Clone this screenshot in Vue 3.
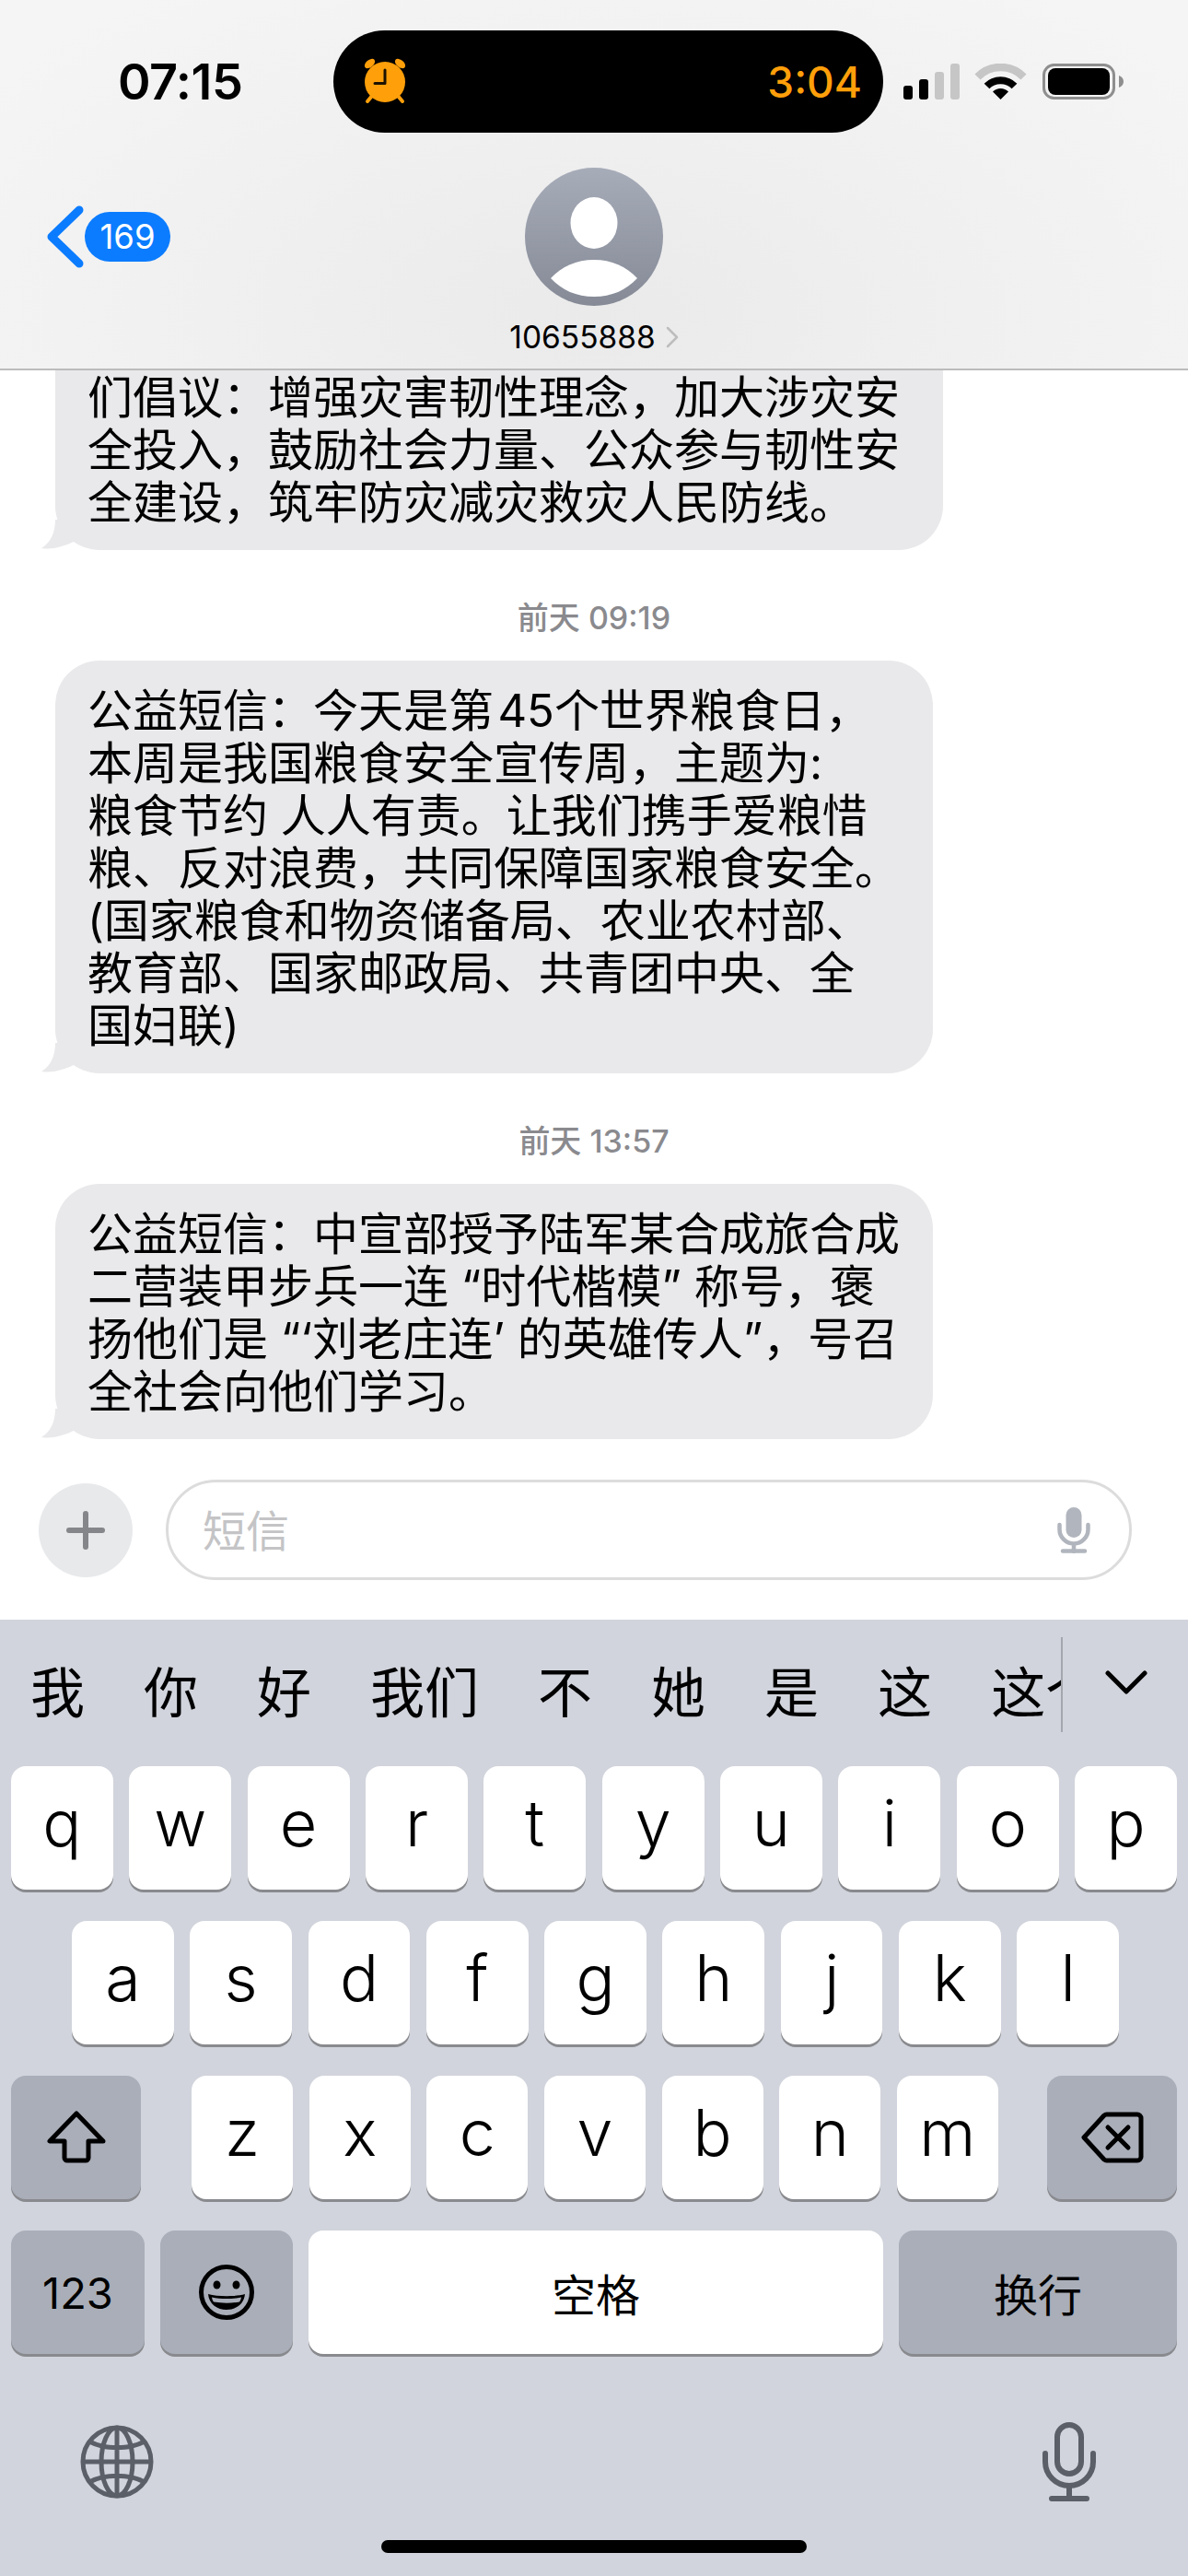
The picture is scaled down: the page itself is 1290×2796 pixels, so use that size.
<script setup>
const bubbles = [
  { time: null, cls: 'first', lines: ['们倡议：增强灾害韧性理念，加大涉灾安', '全投入，鼓励社会力量、公众参与韧性安', '全建设，筑牢防灾减灾救灾人民防线。'] },
  { time: '前天 09:19', cls: '', lines: ['公益短信：今天是第\u200A45个世界粮食日，', '本周是我国粮食安全宣传周，主题为:', '粮食节约 人人有责。让我们携手爱粮惜', '粮、反对浪费，共同保障国家粮食安全。', '(国家粮食和物资储备局、农业农村部、', '教育部、国家邮政局、共青团中央、全', '国妇联)'] },
  { time: '前天 13:57', cls: '', lines: ['公益短信：中宣部授予陆军某合成旅合成', '二营装甲步兵一连 “时代楷模” 称号，褒', '扬他们是 “‘刘老庄连’ 的英雄传人”，号召', '全社会向他们学习。'] },
]
const candidates = ['我', '你', '好', '我们', '不', '她', '是', '这', '这个']
const row1 = 'qwertyuiop'.split('')
const row2 = 'asdfghjkl'.split('')
const row3 = 'zxcvbnm'.split('')
</script>

<template>
  <div class="phone">
    <header class="header">
      <div class="status">
        <div class="time">07:15</div>
        <div class="island">
          <svg class="alarm" width="60" height="60" viewBox="0 0 60 60">
            <ellipse cx="13.5" cy="10" rx="6.5" ry="4" transform="rotate(-40 13.5 10)" fill="#ff9f0a" />
            <ellipse cx="46.5" cy="10" rx="6.5" ry="4" transform="rotate(40 46.5 10)" fill="#ff9f0a" />
            <path d="M16 45l-5 6M44 45l5 6" stroke="#ff9f0a" stroke-width="4" stroke-linecap="round" />
            <circle cx="30" cy="30" r="22" fill="#ff9f0a" />
            <path d="M30 17v14.500h-11" fill="none" stroke="#1c1200" stroke-width="3" stroke-linecap="round" stroke-linejoin="round" />
          </svg>
          <span class="timer">3:04</span>
        </div>
        <svg class="sysicons" width="240" height="40" viewBox="0 0 240 40">
          <rect x="0" y="24" width="10" height="15" rx="3" fill="#000" />
          <rect x="17" y="17" width="10" height="22" rx="3" fill="#000" />
          <rect x="34" y="9" width="10" height="30" rx="3" fill="#c6c6c6" />
          <rect x="51" y="0" width="10" height="39" rx="3" fill="#c6c6c6" />
          <path d="M80.500 14.500A35 35 0 0 1 130.500 14.500" fill="none" stroke="#c6c6c6" stroke-width="8.500" />
          <path d="M90.500 24.500A21 21 0 0 1 120.500 24.500" fill="none" stroke="#000" stroke-width="8" />
          <path d="M105.500 39L97 30.500A12 12 0 0 1 114 30.500Z" fill="#000" />
          <rect x="152.500" y="1.500" width="76" height="36" rx="11" fill="none" stroke="#8e8e8e" stroke-width="3" />
          <rect x="157" y="5" width="67" height="29" rx="8" fill="#000" />
          <path d="M234 13c3 1 5 3.500 5 6.500s-2 5.500-5 6.500z" fill="#8e8e8e" />
        </svg>
      </div>
      <div class="nav">
        <div class="back">
          <svg width="42" height="68" viewBox="0 0 42 68">
            <path d="M36 5L6 34l30 29" fill="none" stroke="#0b7cff" stroke-width="9" stroke-linecap="round" stroke-linejoin="round" />
          </svg>
          <span class="badge">169</span>
        </div>
        <svg class="avatar" width="150" height="150" viewBox="0 0 150 150">
          <defs>
            <linearGradient id="av" x1="0" y1="0" x2="0" y2="1">
              <stop offset="0" stop-color="#a7acb9" />
              <stop offset="1" stop-color="#858a96" />
            </linearGradient>
          </defs>
          <circle cx="75" cy="75" r="75" fill="url(#av)" />
          <ellipse cx="75" cy="60" rx="25.500" ry="28" fill="#fff" />
          <path d="M28 120C40 107 56 100 75 100s35 7 47 20c-12 13-28 20-47 20s-35-7-47-20z" fill="#fff" />
        </svg>
        <div></div>
      </div>
      <div class="contact">
        <span>10655888</span>
        <svg width="14" height="24" viewBox="0 0 14 24">
          <path d="M2 2l10 10L2 22" fill="none" stroke="#bdbdbd" stroke-width="2.500" stroke-linecap="round" stroke-linejoin="round" />
        </svg>
      </div>
    </header>

    <main class="messages">
      <template v-for="(b, i) in bubbles" :key="i">
        <div v-if="b.time" class="stamp">{{ b.time }}</div>
        <div class="bubble" :class="b.cls">
          <div v-for="(l, j) in b.lines" :key="j" class="line">{{ l }}</div>
          <svg class="tail" width="60" height="33" viewBox="0 0 60 33">
            <path d="M15 0C15 14 10 25 0 31C12 33 25 29 37 23L40 0Z" fill="#e9e9eb" />
          </svg>
        </div>
      </template>
    </main>

    <div class="composer">
      <div class="plus">
        <svg width="42" height="42" viewBox="0 0 42 42">
          <path d="M21 3v36M3 21h36" stroke="#85868a" stroke-width="6" stroke-linecap="round" />
        </svg>
      </div>
      <div class="field">
        <span class="placeholder">短信</span>
        <svg width="36" height="50" viewBox="0 0 36 50">
          <rect x="9.500" y="0" width="17" height="33" rx="8.500" fill="#b1b5bd" />
          <path d="M2.500 19v5a15.500 15.500 0 0 0 31 0v-5M18 40v8M6 47.500h24" fill="none" stroke="#b1b5bd" stroke-width="4.500" stroke-linecap="round" />
        </svg>
      </div>
    </div>

    <section class="keyboard">
      <div class="cands">
        <div class="cand-list">
          <span v-for="c in candidates" :key="c" class="cand">{{ c }}</span>
        </div>
        <svg class="cand-more" width="46" height="27" viewBox="0 0 46 27">
          <path d="M3 3l20 20L43 3" fill="none" stroke="#000" stroke-width="5" stroke-linecap="round" stroke-linejoin="round" />
        </svg>
      </div>

      <div class="rows">
        <div class="row">
          <div v-for="k in row1" :key="k" class="key letter">{{ k }}</div>
        </div>
        <div class="row second">
          <div v-for="k in row2" :key="k" class="key letter">{{ k }}</div>
        </div>
        <div class="row third">
          <div class="key dark wide">
            <svg width="66" height="58" viewBox="0 0 66 58">
              <path d="M33 3L4 33h16v18a3 3 0 0 0 3 3h20a3 3 0 0 0 3-3V33h16z" fill="none" stroke="#000" stroke-width="5" stroke-linejoin="round" />
            </svg>
          </div>
          <div class="mid">
            <div v-for="k in row3" :key="k" class="key letter">{{ k }}</div>
          </div>
          <div class="key dark wide">
            <svg width="68" height="58" viewBox="0 0 68 58">
              <path d="M3 29L25 5a4 4 0 0 1 3-1h33a4 4 0 0 1 4 4v42a4 4 0 0 1-4 4H28a4 4 0 0 1-3-1z" fill="none" stroke="#000" stroke-width="5" stroke-linejoin="round" />
              <path d="M29 18l22 22M51 18L29 40" fill="none" stroke="#000" stroke-width="5" stroke-linecap="round" />
            </svg>
          </div>
        </div>
        <div class="row fourth">
          <div class="key dark num">123</div>
          <div class="key dark emoji">
            <svg width="62" height="62" viewBox="0 0 62 62">
              <circle cx="31" cy="31" r="27.500" fill="none" stroke="#000" stroke-width="5" />
              <ellipse cx="20.500" cy="23" rx="4" ry="4.500" fill="#000" />
              <ellipse cx="41.500" cy="23" rx="4" ry="4.500" fill="#000" />
              <path d="M11 33C22 36 40 36 51 33C50 44 41 50 31 50S12 44 11 33Z" fill="#000" />
              <path d="M15 36.500C25 38.500 37 38.500 47 36.500C46.500 39 46 40 45 41.500C36 43 26 43 17 41.500C16 40 15.500 39 15 36.500Z" fill="#a9aeb9" />
            </svg>
          </div>
          <div class="key space">空格</div>
          <div class="key dark ret">换行</div>
        </div>
      </div>

      <div class="bottom">
        <svg width="82" height="82" viewBox="0 0 82 82">
          <g fill="none" stroke="#5b5f68" stroke-width="5">
            <circle cx="41" cy="41" r="37" />
            <ellipse cx="41" cy="41" rx="17" ry="37" />
            <path d="M41 4v74M4 41h74M11 19c17 9 43 9 60 0M11 63c17-9 43-9 60 0" />
          </g>
        </svg>
        <svg width="58" height="86" viewBox="0 0 58 86">
          <g fill="none" stroke="#5b5f68" stroke-width="6" stroke-linecap="round">
            <rect x="16" y="3" width="26" height="53" rx="13" />
            <path d="M3 34v9a26 26 0 0 0 52 0v-9" />
            <path d="M29 69v14M10 83h38" />
          </g>
        </svg>
      </div>
      <div class="home"></div>
    </section>
  </div>
</template>

<style>
html, body { margin: 0; background: #fff; }
</style>

<style scoped>
.phone {
  width: 1290px;
  height: 2796px;
  overflow: hidden;
  display: flex;
  flex-direction: column;
  background: #fff;
  font-family: Inter, "Noto Sans CJK SC", sans-serif;
  color: #000;
}
.header {
  height: 402px;
  box-sizing: border-box;
  border-bottom: 2px solid #bcbcbc;
  background: radial-gradient(ellipse at 50% 85%, #eaeaea 0%, #f0f0f0 45%, #f5f5f5 90%);
  flex: none;
}
.status {
  display: flex;
  align-items: center;
  padding: 33px 0 0 128px;
}
.time {
  width: 234px;
  font-size: 54px;
  font-weight: 600;
  letter-spacing: -0.5px;
  line-height: 111px;
}
.island {
  width: 597px;
  height: 111px;
  border-radius: 56px;
  background: #000;
  display: flex;
  align-items: center;
  justify-content: space-between;
  padding: 0 23px 0 26px;
  box-sizing: border-box;
}
.timer {
  color: #ff9f0a;
  font-size: 46px;
  font-weight: 500;
}
.sysicons { margin-left: 22px; }
.nav {
  display: grid;
  grid-template-columns: 1fr 150px 1fr;
  align-items: center;
  margin-top: 38px;
}
.back {
  display: flex;
  align-items: center;
  padding-left: 50px;
}
.badge {
  width: 93px;
  height: 54px;
  border-radius: 27px;
  background: #0b7cff;
  color: #fff;
  font-size: 36.500px;
  line-height: 54px;
  text-align: center;
}
.contact {
  display: flex;
  justify-content: center;
  align-items: center;
  gap: 11px;
  margin-top: 14px;
  height: 40px;
  font-size: 33.500px;
  line-height: 40px;
}
.messages {
  height: 1204px;
  flex: none;
  overflow: hidden;
  box-sizing: border-box;
  padding-left: 60px;
  display: flex;
  flex-direction: column;
  align-items: flex-start;
}
.stamp {
  width: 1170px;
  text-align: center;
  font-size: 34px;
  line-height: 40px;
  margin: 54px 0 26px;
  color: #8a8a8e;
  font-weight: 500;
}
.bubble {
  position: relative;
  width: 953px;
  box-sizing: border-box;
  padding: 26px 0 23px 35px;
  background: #e9e9eb;
  border-radius: 48px;
}
.bubble.first {
  width: 964px;
  padding-top: 1px;
  border-radius: 0 0 48px 48px;
}
.line {
  font-size: 49px;
  line-height: 57px;
  height: 57px;
  white-space: pre;
}
.tail {
  position: absolute;
  left: -15px;
  bottom: 0;
}
.composer {
  flex: none;
  height: 152px;
  display: flex;
  align-items: flex-start;
  padding-left: 42px;
  gap: 36px;
}
.plus {
  width: 102px;
  height: 102px;
  margin-top: 4px;
  border-radius: 50%;
  background: #e8e9eb;
  display: flex;
  align-items: center;
  justify-content: center;
}
.field {
  width: 1049px;
  height: 109px;
  box-sizing: border-box;
  border: 3px solid #dcdcdc;
  border-radius: 55px;
  display: flex;
  align-items: center;
  justify-content: space-between;
  padding: 0 42px 0 37px;
}
.placeholder {
  font-size: 47px;
  color: #c4c4c6;
  padding-bottom: 5px;
}
.keyboard {
  flex: 1;
  background: #d1d4dc;
  display: flex;
  flex-direction: column;
}
.cands {
  height: 159px;
  display: flex;
  align-items: flex-start;
}
.cand-list {
  width: 1154px;
  height: 103px;
  margin-top: 19px;
  box-sizing: border-box;
  padding: 10px 0 0 33px;
  border-right: 2px solid #a3a6ad;
  overflow: hidden;
  display: flex;
  align-items: center;
  gap: 64px;
  flex: none;
}
.cand {
  font-size: 59px;
  flex: none;
}
.cand-more {
  margin: 55px 0 0 46px;
}
.rows {
  display: flex;
  flex-direction: column;
  gap: 34px;
  padding: 0 12px;
}
.row {
  display: flex;
  gap: 17.500px;
}
.row.second {
  padding: 0 63px 0 66px;
}
.row.third {
  justify-content: space-between;
}
.mid {
  display: flex;
  gap: 17.500px;
  width: 876px;
  margin-left: 2px;
}
.key {
  height: 134px;
  border-radius: 16px;
  background: #fff;
  box-shadow: 0 3px 0 #898a8e;
  display: flex;
  align-items: center;
  justify-content: center;
  flex: 1;
  min-width: 0;
}
.key.letter {
  font-size: 70px;
  font-weight: 300;
  padding-bottom: 12px;
  box-sizing: border-box;
}
.key.dark { background: #a9aeb9; }
.key.wide { flex: 0 0 141px; }
.row.fourth { gap: 17px; }
.key.num { flex: 0 0 145px; font-size: 47px; font-weight: 400; }
.key.emoji { flex: 0 0 144px; }
.key.space { flex: 0 0 624px; font-size: 48px; }
.key.ret { flex: 1; font-size: 48px; }
.bottom {
  display: flex;
  justify-content: space-between;
  align-items: center;
  padding: 0 100px 0 86px;
  margin-top: 74px;
}
.home {
  width: 462px;
  height: 14px;
  border-radius: 7px;
  background: #000;
  margin: 42px auto 0;
}
</style>
